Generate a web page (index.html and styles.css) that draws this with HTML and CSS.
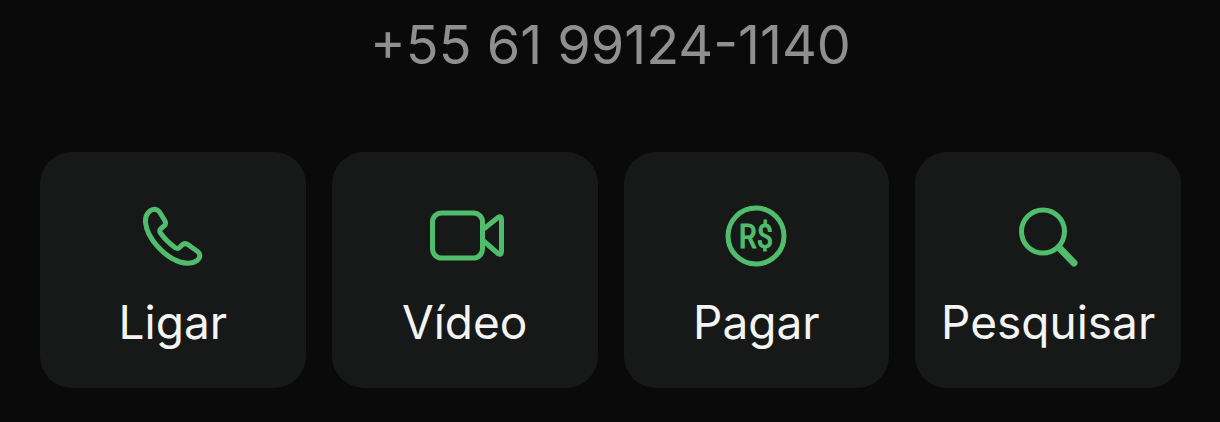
FILE: index.html
```html
<!DOCTYPE html>
<html lang="pt-BR">
<head>
<meta charset="utf-8">
<meta name="viewport" content="width=device-width, initial-scale=1">
<title>Contato</title>
<link rel="stylesheet" href="styles.css">
</head>
<body>
<main class="contact">
  <p class="phone">+55 61 99124-1140</p>
  <div class="actions">
    <button class="action" type="button">
      <svg class="icon" viewBox="0 0 80 64" aria-hidden="true">
        <path d="M26.500 8C24 4.500 20.500 4.500 17.500 6.500C13.500 9.500 12 13 12.500 18.500C14 34 31 53 47 58C54 60 60.500 59 64 56.500C68 53.500 67.500 49.500 64 47L55.500 41C53 39 51 39 49 41L46.500 43.500C45 45 43.500 44.500 42 43.500C36.500 39.500 31 34 27.500 29C26.500 27.500 26.500 26 28 24.500L31 22C33 20.500 33 18.500 31.500 16Z"/>
      </svg>
      <span class="label">Ligar</span>
    </button>
    <button class="action" type="button">
      <svg class="icon" viewBox="0 0 80 64" aria-hidden="true">
        <rect x="7.500" y="9" width="50" height="45" rx="9"/>
        <path d="M58 25.500L73 13.500Q76.500 11.500 76.500 15.500V47.500Q76.500 51.500 73 49.500L58 36.500"/>
      </svg>
      <span class="label">Vídeo</span>
    </button>
    <button class="action" type="button">
      <svg class="icon" viewBox="0 0 80 64" aria-hidden="true">
        <circle cx="40" cy="32" r="28"/>
        <text class="currency" x="40" y="44" text-anchor="middle">R$</text>
      </svg>
      <span class="label">Pagar</span>
    </button>
    <button class="action" type="button">
      <svg class="icon" viewBox="0 0 80 64" aria-hidden="true">
        <circle cx="35" cy="27.500" r="21.500"/>
        <path class="handle" d="M51 43.500L66 59"/>
      </svg>
      <span class="label">Pesquisar</span>
    </button>
  </div>
</main>
</body>
</html>
```
FILE: styles.css
```css
body {
  margin: 0;
  background: #0a0a0a;
  font-family: Inter, "Liberation Sans", sans-serif;
}

.contact {
  padding: 13px 39px 34px 40px;
}

.phone {
  margin: 0 0 75px;
  color: #8f8f8f;
  font-size: 54px;
  line-height: 64px;
  text-align: center;
}

.actions {
  display: grid;
  grid-template-columns: repeat(4, 1fr);
  gap: 26px;
}

.action {
  display: flex;
  flex-direction: column;
  align-items: center;
  gap: 26px;
  min-width: 0;
  padding: 52px 0 38px;
  border: 0;
  border-radius: 32px;
  background: #171918;
  color: #f4f4f4;
  font: inherit;
  cursor: pointer;
}

.icon {
  width: 80px;
  height: 64px;
  fill: none;
  stroke: #50bd6c;
  stroke-width: 5;
  stroke-linecap: round;
  stroke-linejoin: round;
}

.handle {
  stroke-width: 7;
}

.currency {
  fill: #50bd6c;
  stroke: #50bd6c;
  stroke-width: 1;
  font-family: "Liberation Sans Narrow", "Roboto Condensed", Roboto, sans-serif;
  font-size: 34px;
}

.label {
  font-size: 46px;
  line-height: 56px;
}
```
